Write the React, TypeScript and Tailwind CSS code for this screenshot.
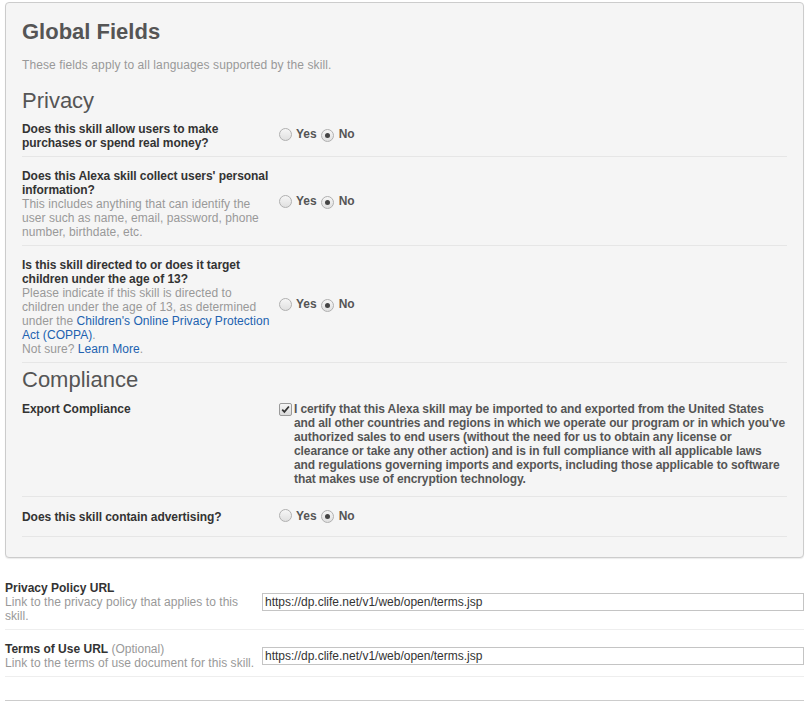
import React from "react";

const Radio = ({ checked }: { checked?: boolean }) => (
  <span className="relative inline-flex items-center justify-center w-[13px] h-[13px] rounded-full border border-[#b0b0b0] bg-gradient-to-b from-[#f6f6f6] to-[#e0e0e0] shrink-0">
    {checked && <span className="w-[5px] h-[5px] rounded-full bg-[#444]" />}
  </span>
);

const YesNo = ({ shift = "mb-[6px]" }: { shift?: string }) => (
  <div className={"flex items-center text-[12px] font-bold text-[#555] leading-[14px] ml-[7px] " + shift}>
    <Radio />
    <span className="ml-[4px]">Yes</span>
    <span className="ml-[4px]"><Radio checked /></span>
    <span className="ml-[5px]">No</span>
  </div>
);

const Checkbox = () => (
  <span className="inline-flex items-center justify-center w-[13px] h-[13px] rounded-[2px] border border-[#9a9a9a] bg-gradient-to-b from-[#f6f6f6] to-[#dadada] shrink-0">
    <svg width="9" height="9" viewBox="0 0 9 9">
      <path d="M1.2 4.6 L3.4 6.9 L7.9 1.5" fill="none" stroke="#333" strokeWidth="1.7" />
    </svg>
  </span>
);

const certLines = [
  "I certify that this Alexa skill may be imported to and exported from the United States",
  "and all other countries and regions in which we operate our program or in which you've",
  "authorized sales to end users (without the need for us to obtain any license or",
  "clearance or take any other action) and is in full compliance with all applicable laws",
  "and regulations governing imports and exports, including those applicable to software",
  "that makes use of encryption technology.",
];

export default function App() {
  const font = { fontFamily: '"Liberation Sans", Arial, sans-serif' };
  return (
    <div style={font} className="w-[809px] h-[708px] bg-white px-[5px] pt-[2px] text-[12px] leading-[14px] text-[#333]">
      <div className="border border-[#cccccc] rounded-[4px] bg-[#f5f5f5] px-4 pt-[17px] pb-5 shadow-[0_1px_1px_rgba(0,0,0,0.08)]">
        <h1 className="text-[22px] leading-[24px] font-bold text-[#555]">Global Fields</h1>
        <p className="mt-[14px] text-[12px] leading-[14px] text-[#999] tracking-[0.1px]">
          These fields apply to all languages supported by the skill.
        </p>
        <h2 className="mt-[18px] text-[22px] leading-[22px] text-[#555]">Privacy</h2>

        <div className="flex items-center border-b border-[#e6e6e6] pt-[10px] pb-[6px]">
          <div className="w-[250px] shrink-0 font-bold text-[#333] tracking-[-0.05px]">
            Does this skill allow users to make purchases or spend real money?
          </div>
          <YesNo shift="mb-[4px]" />
        </div>

        <div className="flex items-center border-b border-[#e6e6e6] pt-[12px] pb-[6px]">
          <div className="w-[250px] shrink-0">
            <div className="font-bold text-[#333] tracking-[-0.05px]">Does this Alexa skill collect users' personal information?</div>
            <div className="text-[#999] tracking-[0.05px]">
              This includes anything that can identify the user such as name, email, password, phone number, birthdate, etc.
            </div>
          </div>
          <YesNo />
        </div>

        <div className="flex items-center border-b border-[#e6e6e6] pt-[12px] pb-[6px]">
          <div className="w-[250px] shrink-0">
            <div className="font-bold text-[#333] tracking-[-0.05px]">Is this skill directed to or does it target children under the age of 13?</div>
            <div className="text-[#999] tracking-[0.05px]">
              Please indicate if this skill is directed to children under the age of 13, as determined under the{" "}
              <span className="text-[#2162b0]">Children's Online Privacy Protection Act (COPPA)</span>.
            </div>
            <div className="text-[#999] tracking-[0.05px]">
              Not sure? <span className="text-[#2162b0]">Learn More</span>.
            </div>
          </div>
          <YesNo />
        </div>

        <h2 className="mt-[6px] text-[22px] leading-[22px] text-[#555]">Compliance</h2>

        <div className="flex items-start border-b border-[#e6e6e6] pt-[11px] pb-[10px]">
          <div className="w-[250px] shrink-0 font-bold text-[#333] tracking-[-0.05px]">Export Compliance</div>
          <div className="flex items-start ml-[7px]">
            <span className="mt-[1px]"><Checkbox /></span>
            <div className="ml-[2px] font-bold text-[#555] tracking-[-0.1px]">
              {certLines.map((l) => (
                <div key={l} className="whitespace-nowrap">{l}</div>
              ))}
            </div>
          </div>
        </div>

        <div className="flex items-center border-b border-[#e6e6e6] pt-[11px] pb-[11px]">
          <div className="w-[250px] shrink-0 font-bold text-[#333] tracking-[-0.05px]">Does this skill contain advertising?</div>
          <YesNo shift="mb-[2px]" />
        </div>
      </div>

      <div className="mt-[11px]">
        <div className="flex items-center border-b border-[#eeeeee] pt-[12px] pb-[6px]">
          <div className="w-[256px] shrink-0">
            <div className="font-bold text-[#333]">Privacy Policy URL</div>
            <div className="text-[#999] tracking-[0.05px]">Link to the privacy policy that applies to this skill.</div>
          </div>
          <div className="ml-[1px] mb-[1px] flex-1 h-[18px] border border-[#c4c4c4] bg-white px-[2px] flex items-center text-[12px] text-[#333]">
            https://dp.clife.net/v1/web/open/terms.jsp
          </div>
        </div>
        <div className="flex items-center border-b border-[#eeeeee] pt-[12px] pb-[6px]">
          <div className="w-[256px] shrink-0">
            <div className="text-[#333]">
              <span className="font-bold">Terms of Use URL</span> <span className="text-[#999]">(Optional)</span>
            </div>
            <div className="text-[#999] tracking-[0.05px]">Link to the terms of use document for this skill.</div>
          </div>
          <div className="ml-[1px] mb-[1px] flex-1 h-[18px] border border-[#c4c4c4] bg-white px-[2px] flex items-center text-[12px] text-[#333]">
            https://dp.clife.net/v1/web/open/terms.jsp
          </div>
        </div>
        <div className="mt-[23px] border-t border-[#cccccc]" />
      </div>
    </div>
  );
}
